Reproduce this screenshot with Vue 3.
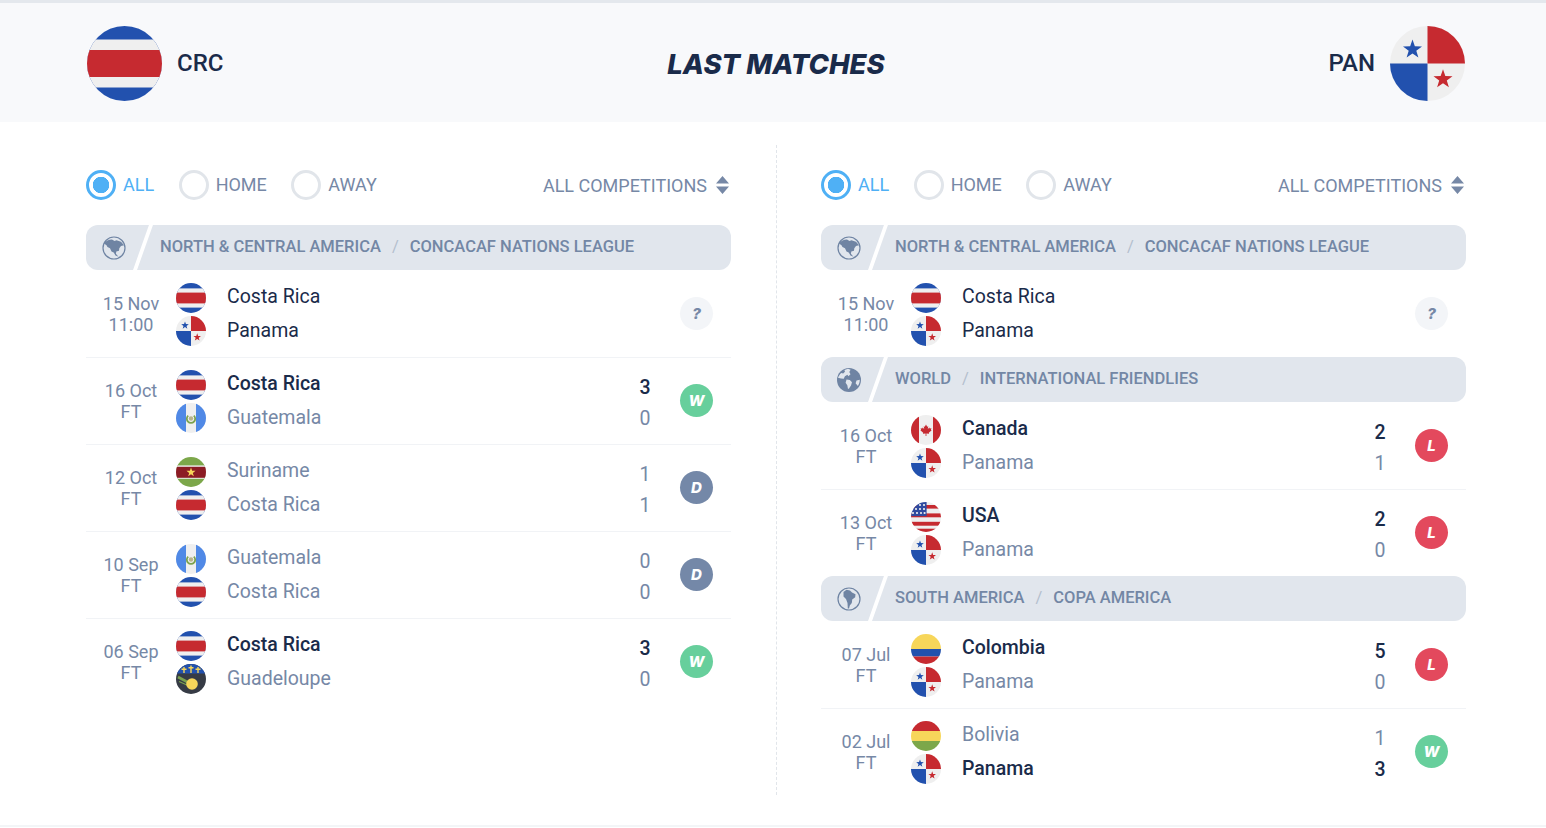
<template>
  <div class="page">
    <svg class="defs" width="0" height="0" aria-hidden="true">
      <defs>
        <symbol id="flag-crc" viewBox="0 0 30 30">
          <rect width="30" height="30" fill="#2251ae" />
          <rect y="5.4" width="30" height="19.2" fill="#efefef" />
          <rect y="9.6" width="30" height="10.8" fill="#c62a30" />
        </symbol>
        <symbol id="flag-pan" viewBox="0 0 30 30">
          <rect width="30" height="30" fill="#efefef" />
          <rect x="15" width="15" height="15" fill="#c62a30" />
          <rect y="15" width="15" height="15" fill="#2251ae" />
          <polygon transform="translate(9 9.4)" fill="#2251ae" points="0,-4 .94,-1.3 3.8,-1.24 1.52,.49 2.35,3.24 0,1.6 -2.35,3.24 -1.52,.49 -3.8,-1.24 -.94,-1.3" />
          <polygon transform="translate(21.2 21.3)" fill="#c62a30" points="0,-4 .94,-1.3 3.8,-1.24 1.52,.49 2.35,3.24 0,1.6 -2.35,3.24 -1.52,.49 -3.8,-1.24 -.94,-1.3" />
        </symbol>
        <symbol id="flag-gua" viewBox="0 0 30 30">
          <rect width="30" height="30" fill="#efefef" />
          <rect width="10" height="30" fill="#5089e6" />
          <rect x="20" width="10" height="30" fill="#5089e6" />
          <circle cx="15" cy="15.5" r="2.2" fill="#b9b48a" />
          <path d="M12.2 12.6a4.200 4.200 0 1 0 5.600 0" fill="none" stroke="#7ba24e" stroke-width="1.800" />
        </symbol>
        <symbol id="flag-sur" viewBox="0 0 30 30">
          <rect width="30" height="30" fill="#7ca74a" />
          <rect y="8.4" width="30" height="13.4" fill="#efefef" />
          <rect y="9.8" width="30" height="11" fill="#8c1c24" />
          <polygon transform="translate(15 15.3) scale(1.2)" fill="#f7d65a" points="0,-4 .94,-1.3 3.8,-1.24 1.52,.49 2.35,3.24 0,1.6 -2.35,3.24 -1.52,.49 -3.8,-1.24 -.94,-1.3" />
        </symbol>
        <symbol id="flag-gpe" viewBox="0 0 30 30">
          <rect width="30" height="30" fill="#363b45" />
          <rect width="30" height="9.5" fill="#2251ae" />
          <g fill="#f7d65a">
            <path d="M7.300 3h1.400v1.500h1.800v1.400H8.700V9H7.300V5.900H5.500V4.500h1.800z" />
            <path d="M14.300 1.500h1.400V3h1.800v1.400h-1.800v4.500h-1.400V4.400h-1.800V3h1.800z" />
            <path d="M21.300 3h1.400v1.500h1.800v1.400h-1.800V9h-1.400V5.900h-1.800V4.500h1.800z" />
          </g>
          <path d="M2 13l13 7" stroke="#7ba24e" stroke-width="2.600" />
          <path d="M3 17.500l9 4" stroke="#7ba24e" stroke-width="1.200" />
          <circle cx="16" cy="20" r="5.800" fill="#f7d65a" />
        </symbol>
        <symbol id="flag-can" viewBox="0 0 30 30">
          <rect width="30" height="30" fill="#efefef" />
          <rect width="8" height="30" fill="#c62a30" />
          <rect x="22" width="8" height="30" fill="#c62a30" />
          <path d="M15 9.500l1.200 2.300 1.100-.6-.5 2.800 1.600-1.600.4 1.100 1.600-.3-.5 1.700.8.400-2.900 2.400.3 1.100-2.700-.4v2.500h-.8v-2.500l-2.700.4.300-1.100-2.900-2.400.8-.4-.5-1.700 1.600.3.400-1.100 1.600 1.600-.5-2.800 1.100.6z" fill="#c62a30" />
        </symbol>
        <symbol id="flag-usa" viewBox="0 0 30 30">
          <rect width="30" height="30" fill="#efefef" />
          <rect y="3" width="30" height="3.6" fill="#c62a30" />
          <rect y="11.400" width="30" height="3.900" fill="#c62a30" />
          <rect y="19.800" width="30" height="3.900" fill="#c62a30" />
          <rect y="26.700" width="30" height="3.300" fill="#c62a30" />
          <rect width="15.600" height="14.100" fill="#2f4ba0" />
          <g fill="#efefef">
            <circle cx="9" cy="3" r="1.100" />
            <circle cx="13" cy="3" r="1.100" />
            <circle cx="5" cy="7" r="1.100" />
            <circle cx="9" cy="7" r="1.100" />
            <circle cx="13" cy="7" r="1.100" />
            <circle cx="2" cy="11" r="1.100" />
            <circle cx="6" cy="11" r="1.100" />
            <circle cx="10" cy="11" r="1.100" />
            <circle cx="13.600" cy="11" r="1.100" />
          </g>
        </symbol>
        <symbol id="flag-col" viewBox="0 0 30 30">
          <rect width="30" height="15" fill="#f7d65a" />
          <rect y="15" width="30" height="7.5" fill="#2251ae" />
          <rect y="22.5" width="30" height="7.5" fill="#c62a30" />
        </symbol>
        <symbol id="flag-bol" viewBox="0 0 30 30">
          <rect width="30" height="10" fill="#c62a30" />
          <rect y="10" width="30" height="10" fill="#f7d65a" />
          <rect y="20" width="30" height="10" fill="#7ca74a" />
        </symbol>
        <symbol id="globe-na" viewBox="0 0 24 24">
          <circle cx="12" cy="12" r="11" fill="none" stroke="currentColor" stroke-width="1.200" />
          <path fill="currentColor" d="M2 7.500C4 4.800 7 3.500 10 3.600l2.500 1.400 2-.8 4.500 1.500 3 3.500-3 .8-1.700 2.200-.3 2.600-2.700.6-.4 2.400 2.600 3-3-1.200-1.800-3.200-2.200-.8-1.500-3.300-2.500-1.300-1-1.700z" />
        </symbol>
        <symbol id="globe-world" viewBox="0 0 24 24">
          <circle cx="12" cy="12" r="12" fill="currentColor" />
          <path fill="#e1e6ed" d="M11 .8l2.600 1-1.300 2.200 1.200 2.300-2.100 1.900-1-1.500-2.500 1.500-1.200 2.500-2.700-.2L1 9.800c.7-2 1.800-3.600 3.200-4.900l2 .7L8 3.800 7.400 2zM9.500 11.500l3.300.6 2.200 2.200-1 3.300-2 2.800-1 .5-.7-3.700-1.700-2.400zM19.500 12.500l3.300-.8c0 2.300-.7 4.400-1.900 6.200l-2.300-2.600z" />
        </symbol>
        <symbol id="globe-sa" viewBox="0 0 24 24">
          <circle cx="12" cy="12" r="11" fill="none" stroke="currentColor" stroke-width="1.200" />
          <path fill="currentColor" d="M6.500 5L9.500 2.800 13 3.500l2 2 3.500 1.700-.3 3-3 2.300-.4 3.500-2 2.500-.8 3h-1.200l-.3-5.500-1.500-4-2.500-2.500z" />
        </symbol>
      </defs>
    </svg>

    <div class="topline"></div>

    <header class="head">
      <div class="team">
        <svg class="team-flag"><use href="#flag-crc" /></svg>
        <span class="team-code">CRC</span>
      </div>
      <h1 class="title">LAST MATCHES</h1>
      <div class="team team-right">
        <span class="team-code">PAN</span>
        <svg class="team-flag"><use href="#flag-pan" /></svg>
      </div>
    </header>

    <main class="columns">
      <section v-for="(col, c) in columns" :key="c" class="col">
        <div class="filters">
          <label v-for="f in ['ALL', 'HOME', 'AWAY']" :key="f" class="radio" :class="{ on: f === 'ALL' }">
            <span class="dot"></span>
            <span class="radio-text">{{ f }}</span>
          </label>
          <div class="comp">
            ALL COMPETITIONS
            <svg class="sort" width="13" height="18" viewBox="0 0 13 18">
              <path d="M6.500 0L13 7.500H0zM0 10.500h13L6.500 18z" fill="currentColor" />
            </svg>
          </div>
        </div>

        <template v-for="(group, g) in col" :key="g">
          <div class="league">
            <div class="league-icon">
              <svg class="globe"><use :href="'#globe-' + group.globe" /></svg>
            </div>
            <span>{{ group.region }}</span>
            <i>/</i>
            <span>{{ group.name }}</span>
          </div>
          <div v-for="(m, i) in group.matches" :key="i" class="match">
            <div class="date">{{ m.date }}<br />{{ m.time }}</div>
            <div class="flags">
              <svg class="flag"><use :href="'#flag-' + m.home[1]" /></svg>
              <svg class="flag"><use :href="'#flag-' + m.away[1]" /></svg>
            </div>
            <div class="names">
              <div :class="nameClass(m, 0)">{{ m.home[0] }}</div>
              <div :class="nameClass(m, 1)">{{ m.away[0] }}</div>
            </div>
            <div class="scores">
              <template v-if="m.score">
                <div :class="nameClass(m, 0)">{{ m.score[0] }}</div>
                <div :class="nameClass(m, 1)">{{ m.score[1] }}</div>
              </template>
            </div>
            <div class="badge" :class="badgeClass[m.res]">{{ m.res }}</div>
          </div>
        </template>
      </section>
      <div class="divider"></div>
    </main>

    <div class="bottomline"></div>
  </div>
</template>

<script setup>
const CRC = ['Costa Rica', 'crc']
const PAN = ['Panama', 'pan']
const GUA = ['Guatemala', 'gua']

const badgeClass = { W: 'win', D: 'draw', L: 'loss', '?': 'next' }

const columns = [
  [
    {
      globe: 'na',
      region: 'NORTH & CENTRAL AMERICA',
      name: 'CONCACAF NATIONS LEAGUE',
      matches: [
        { date: '15 Nov', time: '11:00', home: CRC, away: PAN, res: '?', upcoming: true },
        { date: '16 Oct', time: 'FT', home: CRC, away: GUA, score: [3, 0], res: 'W' },
        { date: '12 Oct', time: 'FT', home: ['Suriname', 'sur'], away: CRC, score: [1, 1], res: 'D' },
        { date: '10 Sep', time: 'FT', home: GUA, away: CRC, score: [0, 0], res: 'D' },
        { date: '06 Sep', time: 'FT', home: CRC, away: ['Guadeloupe', 'gpe'], score: [3, 0], res: 'W' }
      ]
    }
  ],
  [
    {
      globe: 'na',
      region: 'NORTH & CENTRAL AMERICA',
      name: 'CONCACAF NATIONS LEAGUE',
      matches: [{ date: '15 Nov', time: '11:00', home: CRC, away: PAN, res: '?', upcoming: true }]
    },
    {
      globe: 'world',
      region: 'WORLD',
      name: 'INTERNATIONAL FRIENDLIES',
      matches: [
        { date: '16 Oct', time: 'FT', home: ['Canada', 'can'], away: PAN, score: [2, 1], res: 'L' },
        { date: '13 Oct', time: 'FT', home: ['USA', 'usa'], away: PAN, score: [2, 0], res: 'L' }
      ]
    },
    {
      globe: 'sa',
      region: 'SOUTH AMERICA',
      name: 'COPA AMERICA',
      matches: [
        { date: '07 Jul', time: 'FT', home: ['Colombia', 'col'], away: PAN, score: [5, 0], res: 'L' },
        { date: '02 Jul', time: 'FT', home: ['Bolivia', 'bol'], away: PAN, score: [1, 3], res: 'W' }
      ]
    }
  ]
]

// winner is bold, loser is grey, upcoming games are dark but not bold
const nameClass = (m, side) => {
  if (m.upcoming) return 'line'
  if (m.score[0] === m.score[1]) return 'line muted'
  const winner = m.score[0] > m.score[1] ? 0 : 1
  return side === winner ? 'line strong' : 'line muted'
}
</script>

<style>
body {
  background: #fff;
}
</style>

<style scoped>
.page {
  font-family: Roboto, sans-serif;
  color: #1a2b4a;
  height: 828px;
  overflow: hidden;
}

.defs {
  position: absolute;
}

.topline {
  height: 3px;
  background: #e4e8ed;
}

.head {
  height: 119px;
  box-sizing: border-box;
  background: #f8f9fb;
  padding: 2px 81px 0 87px;
  display: flex;
  align-items: center;
  justify-content: space-between;
}

.team {
  display: flex;
  align-items: center;
  gap: 15px;
  width: 200px;
}

.team-right {
  justify-content: flex-end;
}

.team-flag {
  width: 75px;
  height: 75px;
  border-radius: 50%;
}

.team-code {
  font-size: 24px;
  font-weight: 500;
  margin-top: -2px;
}

.title {
  margin: 0;
  font-family: Inter, sans-serif;
  font-size: 27.5px;
  font-weight: 800;
  font-style: italic;
}

.columns {
  display: grid;
  grid-template-columns: 645px 645px;
  column-gap: 90px;
  padding: 23px 0 30px 86px;
  position: relative;
  height: 650px;
}

.col {
  padding-top: 25px;
}

.divider {
  position: absolute;
  left: 776px;
  top: 23px;
  height: 650px;
  border-left: 1px dashed #e1e5ea;
}

.bottomline {
  height: 2px;
  background: #f3f5f7;
}

.filters {
  display: flex;
  align-items: center;
  gap: 24.5px;
  height: 30px;
  margin-bottom: 25px;
  font-size: 18px;
  color: #7688a6;
}

.radio {
  display: flex;
  align-items: center;
  gap: 7px;
}

.radio-text {
  margin-top: -2px;
}

.radio.on {
  color: #4fb0f5;
}

.dot {
  width: 30px;
  height: 30px;
  box-sizing: border-box;
  border-radius: 50%;
  border: 3px solid #e1e5ea;
}

.radio.on .dot {
  border-color: #4fb0f5;
  background: radial-gradient(circle, #4fb0f5 0, #4fb0f5 8px, #fff 8.5px);
}

.comp {
  margin-left: auto;
  display: flex;
  align-items: center;
  gap: 9px;
  padding-right: 2px;
}

.league {
  height: 45px;
  box-sizing: border-box;
  padding-bottom: 2px;
  background: #e1e6ed;
  border-radius: 12px;
  display: flex;
  align-items: center;
  gap: 11px;
  font-size: 16.5px;
  font-weight: 500;
  color: #7387a5;
  overflow: hidden;
}

.league i {
  font-style: normal;
  font-weight: 400;
  color: #b4bfce;
}

.league-icon {
  width: 63px;
  height: 100%;
  display: flex;
  align-items: center;
  padding: 2px 0 0 16px;
  box-sizing: border-box;
  position: relative;
  flex: none;
}

.league-icon::after {
  content: '';
  position: absolute;
  left: 55px;
  top: -2px;
  width: 4px;
  height: 49px;
  background: #fff;
  transform: skewX(-19.5deg);
}

.globe {
  width: 24px;
  height: 24px;
  color: #6f84a3;
}

.match {
  height: 87px;
  box-sizing: border-box;
  padding: 2px 18px 0 0;
  display: grid;
  grid-template-columns: 90px 30px 1fr 30px 53px;
  align-items: center;
}

.match + .match {
  border-top: 1px solid #f1f3f6;
  padding-top: 1px;
}

.date {
  text-align: center;
  font-size: 18px;
  line-height: 21px;
  color: #7688a6;
  margin-bottom: 2px;
}

.flags {
  display: flex;
  flex-direction: column;
  gap: 3px;
}

.flag {
  display: block;
  width: 30px;
  height: 30px;
  border-radius: 50%;
}

.names {
  padding-left: 21px;
  font-size: 19.5px;
  line-height: 34px;
  margin-top: -1px;
}

.scores {
  font-size: 19.5px;
  line-height: 31px;
  text-align: center;
  margin-top: 3px;
}

.line {
  color: #1a2b4a;
}

.line.muted {
  color: #7688a6;
}

.line.strong {
  font-weight: 500;
}

.badge {
  width: 33px;
  height: 33px;
  margin-left: 20px;
  margin-bottom: 2px;
  border-radius: 50%;
  display: flex;
  align-items: center;
  justify-content: center;
  font-family: Inter, sans-serif;
  font-size: 15px;
  font-weight: 800;
  font-style: italic;
  color: #fff;
}

.win {
  background: #67cf9c;
}

.draw {
  background: #7488a8;
}

.loss {
  background: #e3495d;
}

.next {
  background: #f3f5f8;
  color: #7688a6;
}
</style>
